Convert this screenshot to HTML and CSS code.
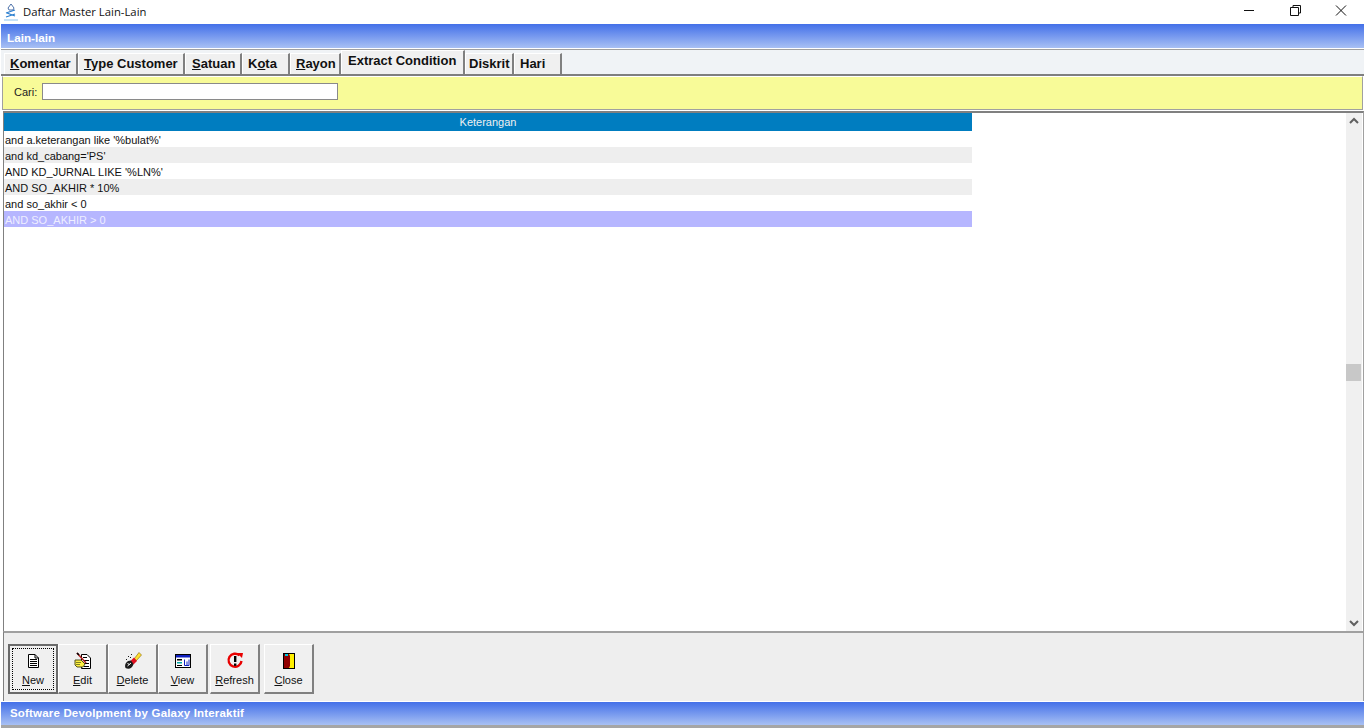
FILE: index.html
```html
<!DOCTYPE html>
<html>
	<head>
		<link rel="stylesheet" href="styles.css">
	</head>
	<body>
	<div class="window">
		<div class="titlebar">
			<svg class="appicon" width="16" height="18" viewBox="0 0 16 18">
				<path d="M8 1 L5 5 L6 7 L10 7 L11 5 Z" fill="none" stroke="#4a6fa8" stroke-width="1"/>
				<path d="M3 10 L12 7 M4 10 L12 13 M3 14 L12 11" fill="none" stroke="#2a7fd0" stroke-width="1.3"/>
				<path d="M1 17 L15 17" stroke="#8cc4ee" stroke-width="1"/>
			</svg>
			<span class="titletext">Daftar Master Lain-Lain</span>
			<div class="winbtns">
				<svg class="winbtn" width="46" height="24" viewBox="0 0 46 24"><path d="M18 10.5 H28" stroke="#111" fill="none"/></svg>
				<svg class="winbtn" width="46" height="24" viewBox="0 0 46 24"><path d="M18.5 7.5 H26.5 V15.5 H18.5 Z M21 7 V5.5 H28.5 V13 H27" stroke="#111" fill="none"/></svg>
				<svg class="winbtn" width="46" height="24" viewBox="0 0 46 24"><path d="M18 5.5 L28 15.5 M28 5.5 L18 15.5" stroke="#111" fill="none"/></svg>
			</div>
		</div>

		<div class="caption">Lain-lain</div>

		<div class="tabs">
			<div class="tab w-komentar"><u>K</u>omentar</div>
			<div class="tab w-type"><u>T</u>ype Customer</div>
			<div class="tab w-satuan"><u>S</u>atuan</div>
			<div class="tab w-kota">K<u>o</u>ta</div>
			<div class="tab w-rayon"><u>R</u>ayon</div>
			<div class="tab tab-active w-extract">Extract Condition</div>
			<div class="tab w-diskrit">Diskrit</div>
			<div class="tab w-hari">Hari</div>
		</div>

		<div class="search">
			<label class="searchlabel">Cari:</label>
			<div class="searchbox"></div>
		</div>

		<div class="gridwrap">
			<div class="grid">
				<div class="gridhead">Keterangan</div>
				<div class="row">and a.keterangan like '%bulat%'</div>
				<div class="row row-alt">and kd_cabang='PS'</div>
				<div class="row">AND KD_JURNAL LIKE '%LN%'</div>
				<div class="row row-alt">AND SO_AKHIR * 10%</div>
				<div class="row">and so_akhir &lt; 0</div>
				<div class="row row-sel">AND SO_AKHIR &gt; 0</div>
			</div>
			<div class="scrollbar">
				<svg width="16" height="16" viewBox="0 0 16 16"><path d="M4 10 L8 6 L12 10" stroke="#606060" stroke-width="2" fill="none"/></svg>
				<div class="scrolltrack"><div class="scrollthumb"></div></div>
				<svg width="16" height="16" viewBox="0 0 16 16"><path d="M4 6 L8 10 L12 6" stroke="#606060" stroke-width="2" fill="none"/></svg>
			</div>
		</div>

		<div class="toolbar">
			<div class="btn btn-default">
				<div class="focus">
					<svg width="16" height="16" viewBox="0 0 16 16">
						<path d="M3.5 1.5 H10 L13.5 5 V14.5 H3.5 Z" fill="#fff" stroke="#000"/>
						<path d="M10 1.5 V5 H13.5 M5 6.5 H12 M5 8.5 H12 M5 10.5 H12 M5 12.5 H12" fill="none" stroke="#000"/>
					</svg>
					<span class="btnlabel"><u>N</u>ew</span>
				</div>
			</div>
			<div class="btn">
				<svg width="18" height="18" viewBox="0 0 18 18">
					<path d="M7.5 2.5 H13 L16.5 6 V16.5 H7.5 Z" fill="#fff" stroke="#000"/>
					<path d="M9 5.5 H13 M10 8.5 H15 M11 11.5 H15 M10 14.5 H15" stroke="#000"/>
					<path d="M1 8 H7 L11 12 L9 15 H3 L1 13 Z" fill="#fff040" stroke="#505020"/>
					<path d="M2 10.5 H7 M2 12.5 H6" stroke="#808020"/>
					<path d="M3 1 L12 11" stroke="#b02020" stroke-width="1.6"/>
					<path d="M3 1 L5 3" stroke="#000" stroke-width="1.6"/>
				</svg>
				<span class="btnlabel"><u>E</u>dit</span>
			</div>
			<div class="btn">
				<svg width="18" height="18" viewBox="0 0 18 18">
					<path d="M10 7 L15 0.5 L17.5 3 L12 9 Z" fill="#ffe030" stroke="#806000" stroke-width=".6"/>
					<path d="M6.5 9 L10 5.5 L13 9 L9.5 12.5 Z" fill="#e01020"/>
					<path d="M1.5 16 C0 12 3 8.5 7 8.5 L9.5 12 C8.5 16 5 18 1.5 16 Z M4 4 H5 V5 H4 Z M7 2 H8 V3 H7 Z M2 7 H3 V8 H2 Z M6 5 H7 V6 H6 Z" fill="#1a1a1a"/>
					<path d="M3.5 14 L7 11 M3.5 11 L5.5 13" stroke="#fff" fill="none"/>
				</svg>
				<span class="btnlabel"><u>D</u>elete</span>
			</div>
			<div class="btn">
				<svg width="18" height="16" viewBox="0 0 18 16">
					<rect x="1.5" y="1.5" width="15" height="13" fill="#fff" stroke="#000"/>
					<rect x="2" y="2" width="14" height="2.5" fill="#1020c0"/>
					<rect x="3" y="6" width="5" height="1.5" fill="#000"/>
					<rect x="3" y="9" width="5" height="1.5" fill="#00a8a8"/>
					<rect x="3" y="12" width="5" height="1" fill="#000"/>
					<path d="M10.5 6.5 V12.5 H15 V6.5 M13 8.5 V12" fill="none" stroke="#1020c0"/>
				</svg>
				<span class="btnlabel"><u>V</u>iew</span>
			</div>
			<div class="btn btn-refresh">
				<svg width="18" height="18" viewBox="0 0 18 18">
					<path d="M13.5 3.5 A6.5 6.5 0 1 0 15.5 9" fill="none" stroke="#e80000" stroke-width="2.4"/>
					<path d="M11 1 L17 1 L16 6 Z" fill="#e80000"/>
					<rect x="8" y="4" width="2.4" height="6" fill="#000"/>
					<rect x="8" y="11.5" width="2.4" height="2.4" fill="#000"/>
				</svg>
				<span class="btnlabel"><u>R</u>efresh</span>
			</div>
			<div class="btn btn-close">
				<svg width="14" height="18" viewBox="0 0 14 18">
					<rect x="1" y="1" width="12" height="16" fill="#000"/>
					<rect x="2" y="2" width="6" height="14" fill="#900000"/>
					<path d="M7 2 H12 V16 H7 L8 14 V4 Z" fill="#ffef00"/>
					<rect x="3" y="2" width="3" height="2" fill="#00c8e0"/>
				</svg>
				<span class="btnlabel"><u>C</u>lose</span>
			</div>
		</div>

		<div class="footer">Software Devolpment by Galaxy Interaktif</div>
	</div>
	</body>
</html>
```

FILE: styles.css
```css
html, body {
	margin: 0;
	padding: 0;
	background-color: #fff;
	overflow: hidden;
}
.window {
	width: 1366px;
	height: 728px;
	display: flex;
	flex-direction: column;
	font-family: "Liberation Sans", Arial, sans-serif;
	color: #000;
}

/* title bar */
.titlebar {
	height: 24px;
	display: flex;
	align-items: flex-start;
	background-color: #fff;
}
.appicon {
	margin: 3px 0 0 3px;
}
.titletext {
	margin: 4px 0 0 4px;
	font-family: "Open Sans", sans-serif;
	font-size: 11.3px;
	line-height: 16px;
	color: #111;
}
.winbtns {
	margin-left: auto;
	margin-right: 2px;
	display: flex;
}
.winbtn {
	display: block;
}

/* blue bars */
.caption, .footer {
	background: linear-gradient(#4370e8, #a8c0f4);
	color: #fff;
	font-weight: bold;
}
.caption {
	height: 24px;
	line-height: 27px;
	margin-left: 1px;
	margin-right: 2px;
	padding-left: 6px;
	font-size: 11.7px;
}

/* tabs */
.tabs {
	height: 24px;
	margin: 1px 2px 0 1px;
	padding-left: 3px;
	display: flex;
	align-items: flex-end;
	background-color: #f0f3f6;
	border-top: 1px solid #a0a0a0;
	border-bottom: 2px solid #7f7f7f;
}
.tab {
	height: 21px;
	box-sizing: border-box;
	padding-left: 5px;
	line-height: 19px;
	font-size: 13px;
	font-weight: bold;
	color: #111;
	white-space: nowrap;
	background-color: #f0f0f0;
	border-left: 1px solid #fff;
	border-top: 1px solid #fff;
	border-right: 2px solid #808080;
}
.tab-active {
	height: 24px;
	padding-left: 6px;
	line-height: 20px;
}
.w-komentar { width: 74px; }
.w-type { width: 107px; }
.w-satuan { width: 57px; padding-left: 6px; }
.w-kota { width: 48px; }
.w-rayon { width: 51px; }
.w-extract { width: 124px; }
.w-diskrit { width: 49px; padding-left: 3px; }
.w-hari { width: 48px; }

/* search panel */
.search {
	height: 34px;
	box-sizing: border-box;
	margin: 0 3px 0 2px;
	padding: 0 0 3px 11px;
	display: flex;
	align-items: center;
	background-color: #f8fb98;
	border: 1px solid #a0a0a0;
	border-top-color: #fff;
}
.searchlabel {
	font-size: 11px;
	width: 28px;
	color: #222;
}
.searchbox {
	width: 294px;
	height: 15px;
	background-color: #fff;
	border: 1px solid #8a8a8a;
}

/* grid */
.gridwrap {
	flex: 1;
	min-height: 0;
	margin: 1px 2px 0 3px;
	padding-right: 1px;
	display: flex;
	background-color: #fff;
	border-top: 2px solid #808080;
	border-left: 1px solid #808080;
	border-right: 1px solid #a0a0a0;
}
.grid {
	flex: 1;
}
.gridhead {
	width: 968px;
	height: 18px;
	line-height: 18px;
	background-color: #007dc0;
	color: #f0f0f0;
	font-size: 11px;
	text-align: center;
}
.row {
	width: 967px;
	height: 16px;
	line-height: 18px;
	padding-left: 1px;
	font-size: 11px;
	color: #111;
}
.row-alt {
	background-color: #eeeeee;
}
.row-sel {
	background-color: #b6b6ff;
	color: #eeeeff;
}
.scrollbar {
	width: 16px;
	display: flex;
	flex-direction: column;
	background-color: #f0f0f0;
}
.scrollbar svg {
	display: block;
}
.scrolltrack {
	flex: 1;
	padding-top: 235px;
}
.scrollthumb {
	width: 15px;
	height: 17px;
	background-color: #c8c8c8;
}

/* bottom buttons */
.toolbar {
	height: 70px;
	box-sizing: border-box;
	margin: 0 2px 0 3px;
	padding: 11px 0 0 4px;
	display: flex;
	align-items: flex-start;
	background-color: #eeeeee;
	border-top: 2px solid #a0a0a0;
	border-left: 1px solid #808080;
	border-right: 1px solid #a0a0a0;
}
.btn {
	width: 50px;
	height: 50px;
	box-sizing: border-box;
	display: flex;
	flex-direction: column;
	align-items: center;
	padding-top: 7px;
	background-color: #f0f0f0;
	border: 1px solid #fff;
	border-right: 2px solid #808080;
	border-bottom: 2px solid #808080;
}
.btn svg {
	display: block;
	height: 18px;
}
.btn-default {
	padding: 2px;
	border: 2px solid #6a6a6a;
}
.btn-refresh {
	margin-left: 2px;
}
.btn-close {
	margin-left: 4px;
}
.focus {
	flex: 1;
	align-self: stretch;
	display: flex;
	flex-direction: column;
	align-items: center;
	padding-top: 3px;
	border: 1px dotted #000;
}
.btnlabel {
	margin-top: 3px;
	font-size: 11px;
	line-height: 14px;
	color: #111;
}

.footer {
	height: 23px;
	line-height: 23px;
	margin: 1px 2px 0 1px;
	padding-left: 9px;
	font-size: 11.5px;
	letter-spacing: .18px;
	border-bottom: 3px solid #a6a6a6;
}
```
